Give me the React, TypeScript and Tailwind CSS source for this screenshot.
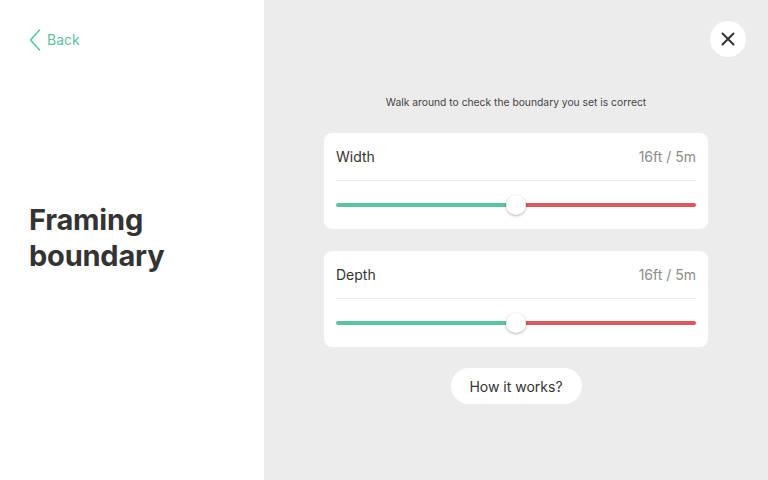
import React, { useState } from 'react'

const font = { fontFamily: 'Inter, "Noto Sans", sans-serif' }

function RangeCard({ label, value }: { label: string; value: string }) {
  const [pos] = useState(50)
  return (
    <div className="w-[384px] rounded-lg bg-white px-3">
      <div className="flex items-center justify-between pt-[14px] pb-[13px] border-b border-[#ececec]">
        <span className="text-[14px] leading-5 text-[#333]">{label}</span>
        <span className="text-[14px] leading-5 text-[#8c8c8c]">{value}</span>
      </div>
      <div className="relative h-[48px] flex items-center">
        <div className="flex w-full h-[4px] rounded-full overflow-hidden">
          <div className="h-full bg-[#5cc3a0]" style={{ width: `${pos}%` }} />
          <div className="h-full flex-1 bg-[#e2555a]" />
        </div>
        <div
          className="absolute top-1/2 w-[20px] h-[20px] -mt-[10px] -ml-[10px] rounded-full bg-white shadow-[0_1px_3px_rgba(0,0,0,0.3)]"
          style={{ left: `${pos}%` }}
        />
      </div>
    </div>
  )
}

export default function App() {
  return (
    <div className="flex w-[768px] h-[480px] overflow-hidden" style={font}>
      <div className="w-[264px] h-full bg-white flex flex-col pl-[29px]">
        <button className="flex items-center gap-[6px] mt-[29px] h-[21px] text-[#5cc3a0] text-[14px]">
          <svg width="12" height="22" viewBox="0 0 12 22" fill="none">
            <path d="M10.5 1 L1.5 11 L10.5 21" stroke="#5cc3a0" strokeWidth="1.6" strokeLinecap="round" strokeLinejoin="round" />
          </svg>
          <span>Back</span>
        </button>
        <h1 className="mt-[152px] text-[29px] leading-[36px] font-bold text-[#333] tracking-[-0.2px]">
          Framing
          <br />
          boundary
        </h1>
      </div>
      <div className="flex-1 h-full bg-[#ececec] flex flex-col items-center pt-[21px]">
        <div className="w-full flex justify-end pr-[22px]">
          <button className="w-[36px] h-[36px] rounded-full bg-white flex items-center justify-center">
            <svg width="14" height="14" viewBox="0 0 14 14">
              <path d="M1.5 1.5 L12.5 12.5 M12.5 1.5 L1.5 12.5" stroke="#333" strokeWidth="2" strokeLinecap="round" />
            </svg>
          </button>
        </div>
        <p className="mt-[38px] text-[10.3px] leading-[14px] text-[#444]">
          Walk around to check the boundary you set is correct
        </p>
        <div className="mt-[24px] flex flex-col gap-[22px]">
          <RangeCard label="Width" value="16ft / 5m" />
          <RangeCard label="Depth" value="16ft / 5m" />
        </div>
        <button className="mt-[21px] h-[36px] w-[131px] rounded-full bg-white text-[14px] text-[#333]">
          How it works?
        </button>
      </div>
    </div>
  )
}
